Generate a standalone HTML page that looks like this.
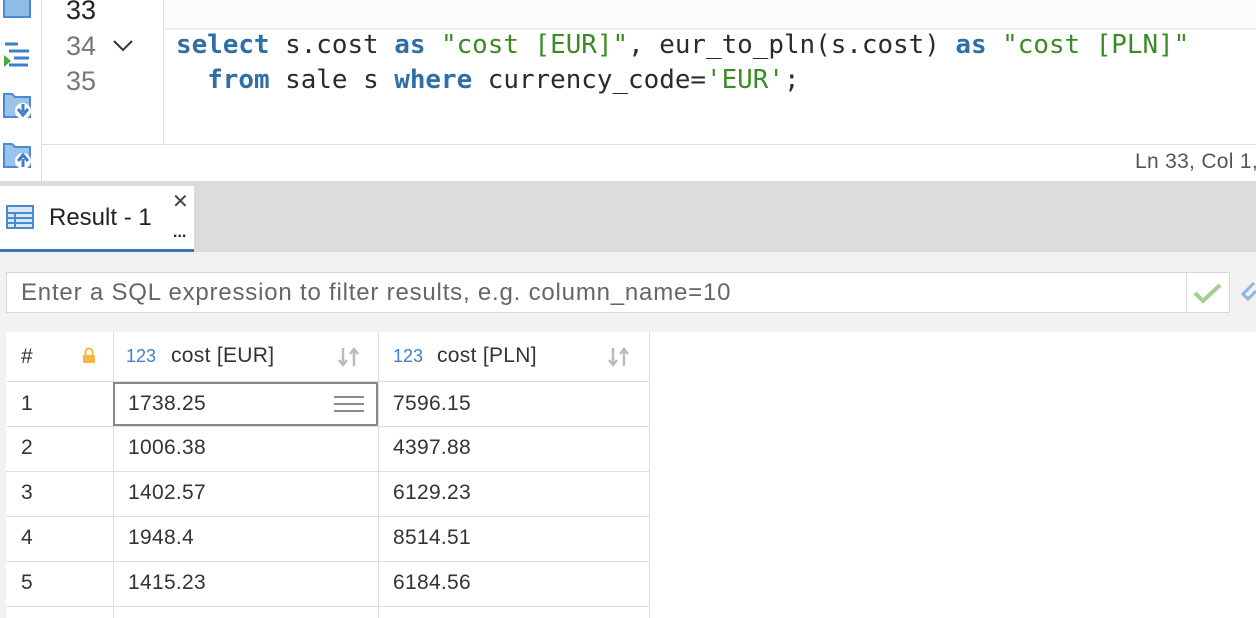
<!DOCTYPE html>
<html><head><style>
*{margin:0;padding:0;box-sizing:border-box}
body{width:1256px;height:618px;overflow:hidden;background:#f2f2f2;font-family:"Liberation Sans",sans-serif;position:relative}
.abs{position:absolute}
.mono{font-family:"DejaVu Sans Mono","Liberation Mono",monospace;font-size:25.9px;white-space:pre}
.kw{color:#2f6fa6;font-weight:bold}
.str{color:#3b8a26}
.tx{color:#2b2b2b}
.cell{position:absolute;font-size:21px;color:#333;letter-spacing:0.3px}
</style></head><body>
<div class="abs" style="left:0;top:0;width:1256px;height:181px;background:#fff"></div>
<div class="abs" style="left:0;top:0;width:42px;height:181px;background:#fff;border-right:1px solid #ddd"></div>
<div class="abs" style="left:163px;top:0;width:1px;height:144px;background:#e3e3e3"></div>
<div class="abs" style="left:164px;top:0;width:1092px;height:30px;background:#fcfcfc;border-bottom:2px solid #f0f0f0"></div>
<div class="abs" style="left:42px;top:144px;width:1214px;height:1px;background:#ddd"></div>
<svg class="abs" style="left:0;top:0" width="42" height="181">
<rect x="4" y="-6" width="26" height="23" fill="#8fbce6" stroke="#4a8ad0" stroke-width="2"/>
<g stroke="#3d7fcb" stroke-width="3"><line x1="5" y1="44" x2="18" y2="44"/><line x1="9" y1="51" x2="29" y2="51"/><line x1="14" y1="58" x2="29" y2="58"/><line x1="9" y1="65" x2="28" y2="65"/></g>
<polygon points="4,55 11,61 4,67" fill="#4aa83a"/>
<path d="M4 94h8l3 3h15v20H4z" fill="#9ac4ea" stroke="#4a8ad0" stroke-width="2"/>
<circle cx="23" cy="111" r="8" fill="#fff"/><path d="M23 104v8M18 109l5 6 5-6" stroke="#3d7fcb" stroke-width="3" fill="none"/>
<path d="M4 144h8l3 3h15v20H4z" fill="#9ac4ea" stroke="#4a8ad0" stroke-width="2"/>
<circle cx="23" cy="161" r="8" fill="#fff"/><path d="M23 167v-8M18 161l5-6 5 6" stroke="#3d7fcb" stroke-width="3" fill="none"/>
</svg>
<div class="abs" style="left:66px;top:-5px;color:#222;font-size:27px">33</div>
<div class="abs" style="left:66px;top:31px;color:#777;font-size:27px">34</div>
<div class="abs" style="left:66px;top:66px;color:#777;font-size:27px">35</div>
<svg class="abs" style="left:112px;top:38px" width="22" height="16"><path d="M2 3l9 9 9-9" stroke="#333" stroke-width="2" fill="none"/></svg>
<div class="abs mono" style="left:176px;top:30px"><span class="kw">select</span><span class="tx"> s.cost </span><span class="kw">as</span><span class="str"> "cost [EUR]"</span><span class="tx">, eur_to_pln(s.cost) </span><span class="kw">as</span><span class="str"> "cost [PLN]"</span></div>
<div class="abs mono" style="left:176px;top:65px"><span class="tx">  </span><span class="kw">from</span><span class="tx"> sale s </span><span class="kw">where</span><span class="tx"> currency_code=</span><span class="str">'EUR'</span><span class="tx">;</span></div>
<div class="abs" style="left:1135px;top:150px;font-size:21px;color:#555;white-space:nowrap;letter-spacing:0.3px">Ln 33, Col 1,</div>
<div class="abs" style="left:0;top:181px;width:1256px;height:71px;background:#dcdcdc"></div>
<div class="abs" style="left:0;top:186px;width:194px;height:66px;background:#fff;border-bottom:3px solid #3a76b8"></div>
<svg class="abs" style="left:6px;top:205px" width="28" height="24"><rect x="1" y="1" width="26" height="22" fill="#dbe9f7" stroke="#4a8ad0" stroke-width="2"/><g stroke="#4a8ad0" stroke-width="2"><line x1="1" y1="8" x2="27" y2="8"/><line x1="1" y1="13" x2="27" y2="13"/><line x1="1" y1="18" x2="27" y2="18"/><line x1="9" y1="8" x2="9" y2="23"/></g></svg>
<div class="abs" style="left:49px;top:204px;font-size:24px;color:#222">Result - 1</div>
<div class="abs" style="left:172px;top:189px;font-size:20px;color:#444">✕</div>
<div class="abs" style="left:173px;top:224px;font-size:16px;color:#222;font-weight:bold">...</div>
<div class="abs" style="left:6px;top:272px;width:1224px;height:41px;background:#fff;border:1px solid #d8d8d8"></div>
<div class="abs" style="left:1186px;top:272px;width:1px;height:41px;background:#ddd"></div>
<div class="abs" style="left:21px;top:279px;font-size:24px;letter-spacing:0.8px;color:#666;white-space:nowrap">Enter a SQL expression to filter results, e.g. column_name=10</div>
<svg class="abs" style="left:1192px;top:280px" width="32" height="26"><path d="M3 13l8 8 17-16" stroke="#9fcf94" stroke-width="4" fill="none"/></svg>
<svg class="abs" style="left:1240px;top:280px" width="16" height="26"><path d="M14 3l-11 11 5 5 8-8" stroke="#8fb6e0" stroke-width="3" fill="none"/></svg>
<div class="abs" style="left:6px;top:332px;width:1250px;height:286px;background:#fff"></div>
<div class="abs" style="left:6px;top:332px;width:644px;height:50px;background:#fff;border-bottom:1px solid #ddd"></div>
<div class="abs" style="left:113px;top:332px;width:1px;height:286px;background:#ddd"></div>
<div class="abs" style="left:378px;top:332px;width:1px;height:286px;background:#ddd"></div>
<div class="abs" style="left:649px;top:332px;width:1px;height:286px;background:#ddd"></div>
<div class="abs" style="left:6px;top:426px;width:644px;height:1px;background:#ddd"></div>
<div class="abs" style="left:6px;top:471px;width:644px;height:1px;background:#ddd"></div>
<div class="abs" style="left:6px;top:516px;width:644px;height:1px;background:#ddd"></div>
<div class="abs" style="left:6px;top:561px;width:644px;height:1px;background:#ddd"></div>
<div class="abs" style="left:6px;top:606px;width:644px;height:1px;background:#ddd"></div>
<div class="abs" style="left:113px;top:382px;width:265px;height:44px;border:2px solid #888"></div>
<div class="cell" style="left:21px;top:345px">#</div>
<svg class="abs" style="left:82px;top:347px" width="14" height="17"><path d="M3.5 8V5a3.5 3.5 0 0 1 7 0v3" stroke="#f0b840" stroke-width="2" fill="none"/><rect x="1" y="8" width="12" height="8" rx="1" fill="#f0b840"/></svg>
<div class="cell" style="left:126px;top:346px;font-size:18px;color:#3d7fcb;letter-spacing:0">123</div>
<div class="cell" style="left:171px;top:344px">cost [EUR]</div>
<div class="cell" style="left:393px;top:346px;font-size:18px;color:#3d7fcb;letter-spacing:0">123</div>
<div class="cell" style="left:437px;top:344px">cost [PLN]</div>
<svg class="abs" style="left:337px;top:346px" width="24" height="22"><path d="M6 2v17M2 14l4 5 4-5M17 20V3M13 8l4-5 4 5" stroke="#bbb" stroke-width="2.5" fill="none"/></svg>
<svg class="abs" style="left:607px;top:346px" width="24" height="22"><path d="M6 2v17M2 14l4 5 4-5M17 20V3M13 8l4-5 4 5" stroke="#bbb" stroke-width="2.5" fill="none"/></svg>
<svg class="abs" style="left:333px;top:395px" width="32" height="18"><g stroke="#666" stroke-width="1.5"><line x1="1" y1="2" x2="31" y2="2"/><line x1="1" y1="9" x2="31" y2="9"/><line x1="1" y1="16" x2="31" y2="16"/></g></svg>
<div class="cell" style="left:21px;top:392px">1</div><div class="cell" style="left:128px;top:392px">1738.25</div><div class="cell" style="left:393px;top:392px">7596.15</div>
<div class="cell" style="left:21px;top:436px">2</div><div class="cell" style="left:128px;top:436px">1006.38</div><div class="cell" style="left:393px;top:436px">4397.88</div>
<div class="cell" style="left:21px;top:481px">3</div><div class="cell" style="left:128px;top:481px">1402.57</div><div class="cell" style="left:393px;top:481px">6129.23</div>
<div class="cell" style="left:21px;top:526px">4</div><div class="cell" style="left:128px;top:526px">1948.4</div><div class="cell" style="left:393px;top:526px">8514.51</div>
<div class="cell" style="left:21px;top:571px">5</div><div class="cell" style="left:128px;top:571px">1415.23</div><div class="cell" style="left:393px;top:571px">6184.56</div>
</body></html>
